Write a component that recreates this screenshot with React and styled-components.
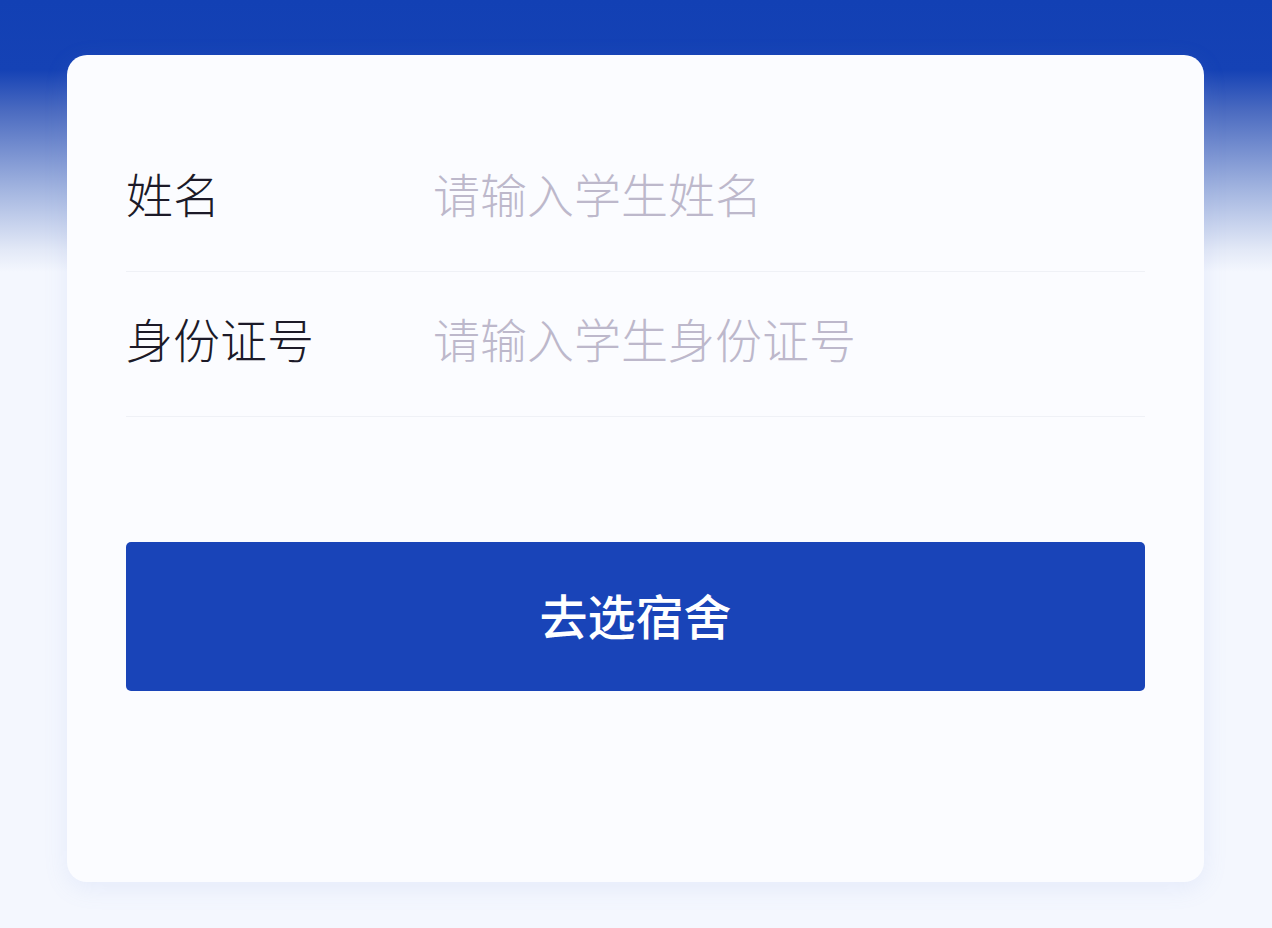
import styled, { createGlobalStyle } from 'styled-components';

const GlobalStyle = createGlobalStyle`
	* {
		box-sizing: border-box;
	}
	body {
		margin: 0;
		font-family: 'Noto Sans CJK SC', 'Noto Sans', sans-serif;
	}
`;

const fields = [
	{ label: '姓名', placeholder: '请输入学生姓名' },
	{ label: '身份证号', placeholder: '请输入学生身份证号' },
];

function App() {
	return (
		<Page>
			<GlobalStyle />
			<Card>
				<Form>
					{fields.map((f) => (
						<Row key={f.label}>
							<Label>{f.label}</Label>
							<Input placeholder={f.placeholder} />
						</Row>
					))}
				</Form>
				<SubmitButton type="button">去选宿舍</SubmitButton>
			</Card>
		</Page>
	);
}

export default App;

const Page = styled.div`
	width: 1272px;
	height: 928px;
	padding: 55px 68px 46px 67px;
	background: linear-gradient(
		180deg,
		#1240b4 0px,
		#1542b5 70px,
		#4a6ac0 110px,
		#a3b5e0 190px,
		#e3e9f7 250px,
		#f4f7fe 272px,
		#f4f7fe 100%
	);
	overflow: hidden;
`;

const Card = styled.section`
	height: 827px;
	background: #fbfcff;
	border-radius: 20px;
	padding: 72px 59px 0 59px;
	box-shadow: 0 6px 24px rgba(120, 150, 220, 0.12);
`;

const Form = styled.div`
	display: flex;
	flex-direction: column;
`;

const Row = styled.div`
	display: flex;
	align-items: center;
	height: 145px;
	border-bottom: 1px solid #eff1f6;
	padding-bottom: 14px;
`;

const Label = styled.span`
	width: 307px;
	flex-shrink: 0;
	font-size: 47px;
	font-weight: 300;
	color: #1c1a28;
`;

const Input = styled.input`
	flex: 1;
	border: none;
	outline: none;
	background: transparent;
	padding: 0;
	font-family: 'Noto Sans CJK SC', 'Noto Sans', sans-serif;
	font-size: 47px;
	font-weight: 300;
	color: #1c1a28;
	&::placeholder {
		color: #bdb8cb;
	}
`;

const SubmitButton = styled.button`
	display: flex;
	align-items: center;
	justify-content: center;
	width: 100%;
	height: 149px;
	margin-top: 125px;
	padding-bottom: 6px;
	border: none;
	border-radius: 5px;
	background: #1944b8;
	color: #ffffff;
	font-family: 'Noto Sans CJK SC', 'Noto Sans', sans-serif;
	font-size: 48px;
	font-weight: 500;
	cursor: pointer;
`;
